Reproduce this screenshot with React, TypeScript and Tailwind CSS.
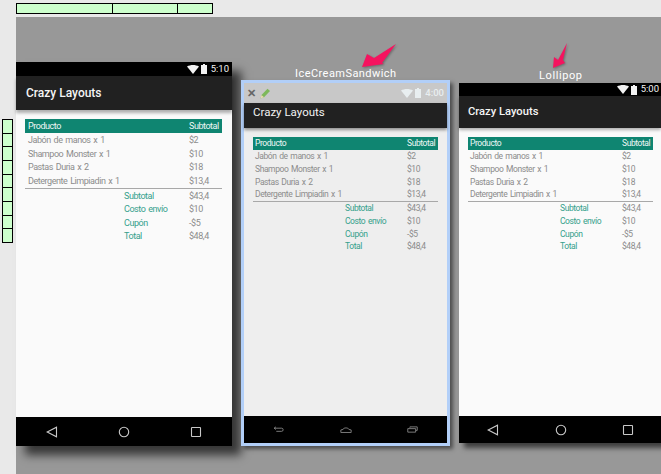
import React from "react";

const rows = [
  ["Jabón de manos x 1", "$2"],
  ["Shampoo Monster x 1", "$10"],
  ["Pastas Duria x 2", "$18"],
  ["Detergente Limpiadin x 1", "$13,4"],
];
const totals = [
  ["Subtotal", "$43,4"],
  ["Costo envío", "$10"],
  ["Cupón", "-$5"],
  ["Total", "$48,4"],
];

function Wifi() {
  return (
    <svg width="12" height="9" viewBox="0 0 12 9" className="shrink-0">
      <path d="M0 1.5C3.5-.5 8.5-.5 12 1.5L6 9Z" fill="currentColor" />
    </svg>
  );
}
function Battery() {
  return (
    <svg width="6" height="10" viewBox="0 0 6 10" className="shrink-0">
      <path d="M2 0h2v1h2v9H0V1h2Z" fill="currentColor" />
    </svg>
  );
}
function MaterialNav() {
  return (
    <>
      <svg width="12" height="12" viewBox="0 0 12 12">
        <path d="M10.5 1.2V10.8L1.2 6Z" fill="none" stroke="#c8c8c8" strokeWidth="1.1" />
      </svg>
      <svg width="12" height="12" viewBox="0 0 12 12">
        <circle cx="6" cy="6" r="4.7" fill="none" stroke="#c8c8c8" strokeWidth="1.1" />
      </svg>
      <svg width="12" height="12" viewBox="0 0 12 12">
        <rect x="1.5" y="1.5" width="9" height="9" rx=".6" fill="none" stroke="#c8c8c8" strokeWidth="1.1" />
      </svg>
    </>
  );
}
function HoloNav() {
  return (
    <>
      <svg width="11" height="7" viewBox="0 0 12 8">
        <path d="M3 1 1 2.5 3 4M1 2.5h8.5a1.7 1.7 0 0 1 0 3.6H3.5" fill="none" stroke="#8a8a8a" />
      </svg>
      <svg width="12" height="7" viewBox="0 0 13 8">
        <path d="M.6 7.4V4.5L3 4c.7-2.4 6-2.4 7 0l2.4.5v2.9Z" fill="none" stroke="#8a8a8a" />
      </svg>
      <svg width="11" height="7" viewBox="0 0 12 8">
        <path d="M3 2V1h8.4v4H10M.6 3h9v4H.6Z" fill="none" stroke="#8a8a8a" />
      </svg>
    </>
  );
}

function Table({ large }: { large: boolean }) {
  const text = large
    ? "text-[9px] tracking-[-0.45px] [word-spacing:1px]"
    : "text-[8.5px] tracking-[-0.42px] [word-spacing:1px]";
  const row = large ? "h-[13.6px]" : "h-[12.75px]";
  const grid = large ? "grid-cols-[96px_65px_1fr]" : "grid-cols-[90px_62px_1fr]";
  const pad = large ? "pl-[3px]" : "pl-[2px]";
  return (
    <div className={`${text} leading-none`}>
      <div className={`grid ${grid} items-center ${pad} bg-[#0f8571] text-[#f0f8f6] ${large ? "h-[14px]" : "h-[13px]"}`}>
        <span className="col-span-2">Producto</span>
        <span>Subtotal</span>
      </div>
      <div className={large ? "pt-px" : ""}>
        {rows.map((r) => (
          <div key={r[0]} className={`grid ${grid} items-center ${row} text-[#8c8c8c] ${pad}`}>
            <span className="col-span-2 whitespace-nowrap">{r[0]}</span>
            <span>{r[1]}</span>
          </div>
        ))}
      </div>
      <div className="h-px bg-[#a8a8a8]" />
      <div>
        {totals.map((r) => (
          <div key={r[0]} className={`grid ${grid} items-center ${row} ${pad}`}>
            <span />
            <span className="text-[#35a08c] whitespace-nowrap">{r[0]}</span>
            <span className="text-[#8c8c8c]">{r[1]}</span>
          </div>
        ))}
      </div>
    </div>
  );
}

export default function App() {
  return (
    <div className="w-[661px] h-[474px] overflow-hidden bg-[#e9e9e9] flex flex-col font-['Roboto',sans-serif]">
      <div className="h-[17px] shrink-0 pl-[16px] pt-[3px]">
        <div className="flex h-[11px] w-[197px] border border-black bg-[#ccffcc] box-border">
          <div className="w-[96px] border-r border-black" />
          <div className="w-[65px] border-r border-black" />
          <div className="flex-1" />
        </div>
      </div>
      <div className="flex flex-1 min-h-0">
        <div className="w-[16px] shrink-0 pl-[2px] pt-[102px]">
          <div className="flex flex-col w-[11px] h-[124px] border border-black bg-[#ccffcc] box-border">
            {Array.from({ length: 9 }).map((_, i) => (
              <div key={i} className="flex-1 border-b last:border-b-0 border-black" />
            ))}
          </div>
        </div>
        <div className="relative flex-1 bg-[#989898]">
          {/* Phone 1 */}
          <div className="absolute left-0 top-[45px] w-[216px] h-[384px] flex flex-col bg-[#fafafa] shadow-[9px_9px_9px_rgba(0,0,0,0.65)]">
            <div className="h-[14px] shrink-0 bg-black text-[#f2f2f2] flex items-center justify-end gap-[2px] pr-[3px] text-[9.5px]">
              <Wifi />
              <Battery />
              <span className="ml-[2px]">5:10</span>
            </div>
            <div className="h-[34px] shrink-0 bg-[#212121] text-[#f5f5f5] text-[12px] font-medium flex items-center pl-[10px] shadow-[0_3px_3px_rgba(0,0,0,0.3)] z-10">
              Crazy Layouts
            </div>
            <div className="flex-1 pl-[9px] pr-[10px] pt-[9px]">
              <Table large />
            </div>
            <div className="h-[29px] shrink-0 bg-black flex items-center justify-between pl-[30px] pr-[30px]">
              <MaterialNav />
            </div>
          </div>

          {/* Phone 2 */}
          <div className="absolute left-[225px] top-[63px] w-[209px] h-[366px] border-[3px] border-[#b2cff8] flex flex-col bg-[#eeeeee] shadow-[3px_3px_4px_rgba(0,0,0,0.5)]">
            <div className="h-[20px] shrink-0 bg-[#c8c8c8] flex items-center pl-[3px] pr-[3px] text-[#e8eef0] text-[9.5px] gap-[2px]">
              <span className="text-[#666666] text-[11px] font-bold leading-none">✕</span>
              <svg width="11" height="11" viewBox="0 0 11 11" className="ml-[2px]">
                <path d="M.5 10.5 1.5 7 7.5.8 10 3 4 9.3Z" fill="#7db85a" />
                <path d="M.5 10.5 1.5 7 4 9.3Z" fill="#e8d8b0" />
              </svg>
              <div className="flex-1" />
              <Wifi />
              <Battery />
              <span className="ml-[2px] font-medium">4:00</span>
            </div>
            <div className="h-[25px] shrink-0 bg-[#212121] text-[#f2f2f2] text-[11.5px] pl-[9px] leading-[19px] shadow-[0_2px_3px_rgba(0,0,0,0.4)] z-10">
              Crazy Layouts
            </div>
            <div className="flex-1 px-[9px] pt-[9px]">
              <Table large={false} />
            </div>
            <div className="h-[27px] shrink-0 bg-black flex items-center justify-between pl-[29px] pr-[29px] pb-px">
              <HoloNav />
            </div>
          </div>
          <div className="absolute left-[279px] top-[51px] text-[11px] text-white leading-none tracking-[0.45px] whitespace-nowrap">
            IceCreamSandwich
          </div>
          <svg className="absolute left-[346px] top-[27px] drop-shadow-[1px_1px_1px_rgba(0,0,0,0.3)]" width="35" height="24" viewBox="0 0 35 24">
            <polygon points="0,23 5,10 12,14 34,0 20,19 22,20" fill="#f5135f" />
          </svg>

          {/* Phone 3 */}
          <div className="absolute left-[443px] top-[66px] w-[202px] h-[360px] flex flex-col bg-[#fafafa] shadow-[5px_5px_5px_rgba(0,0,0,0.6)]">
            <div className="h-[13px] shrink-0 bg-black text-[#f2f2f2] flex items-center justify-end gap-[2px] pr-[2px] text-[9.5px]">
              <Wifi />
              <Battery />
              <span className="ml-[2px]">5:00</span>
            </div>
            <div className="h-[32px] shrink-0 bg-[#212121] text-[#f5f5f5] text-[11.2px] font-medium flex items-center pl-[9px] shadow-[0_2px_3px_rgba(0,0,0,0.3)] z-10">
              Crazy Layouts
            </div>
            <div className="flex-1 pl-[9px] pr-[8px] pt-[9px]">
              <Table large={false} />
            </div>
            <div className="h-[27px] shrink-0 bg-black flex items-center justify-between pl-[28px] pr-[27px]">
              <MaterialNav />
            </div>
          </div>
          <div className="absolute left-[523px] top-[53px] text-[11px] text-white leading-none tracking-[0.6px] whitespace-nowrap">
            Lollipop
          </div>
          <svg className="absolute left-[537px] top-[26px] drop-shadow-[1px_1px_1px_rgba(0,0,0,0.3)]" width="15" height="26" viewBox="0 0 15 26">
            <polygon points="0,25 1,14 5,17 14,0 10,17 12,20" fill="#f5135f" />
          </svg>
        </div>
      </div>
    </div>
  );
}
